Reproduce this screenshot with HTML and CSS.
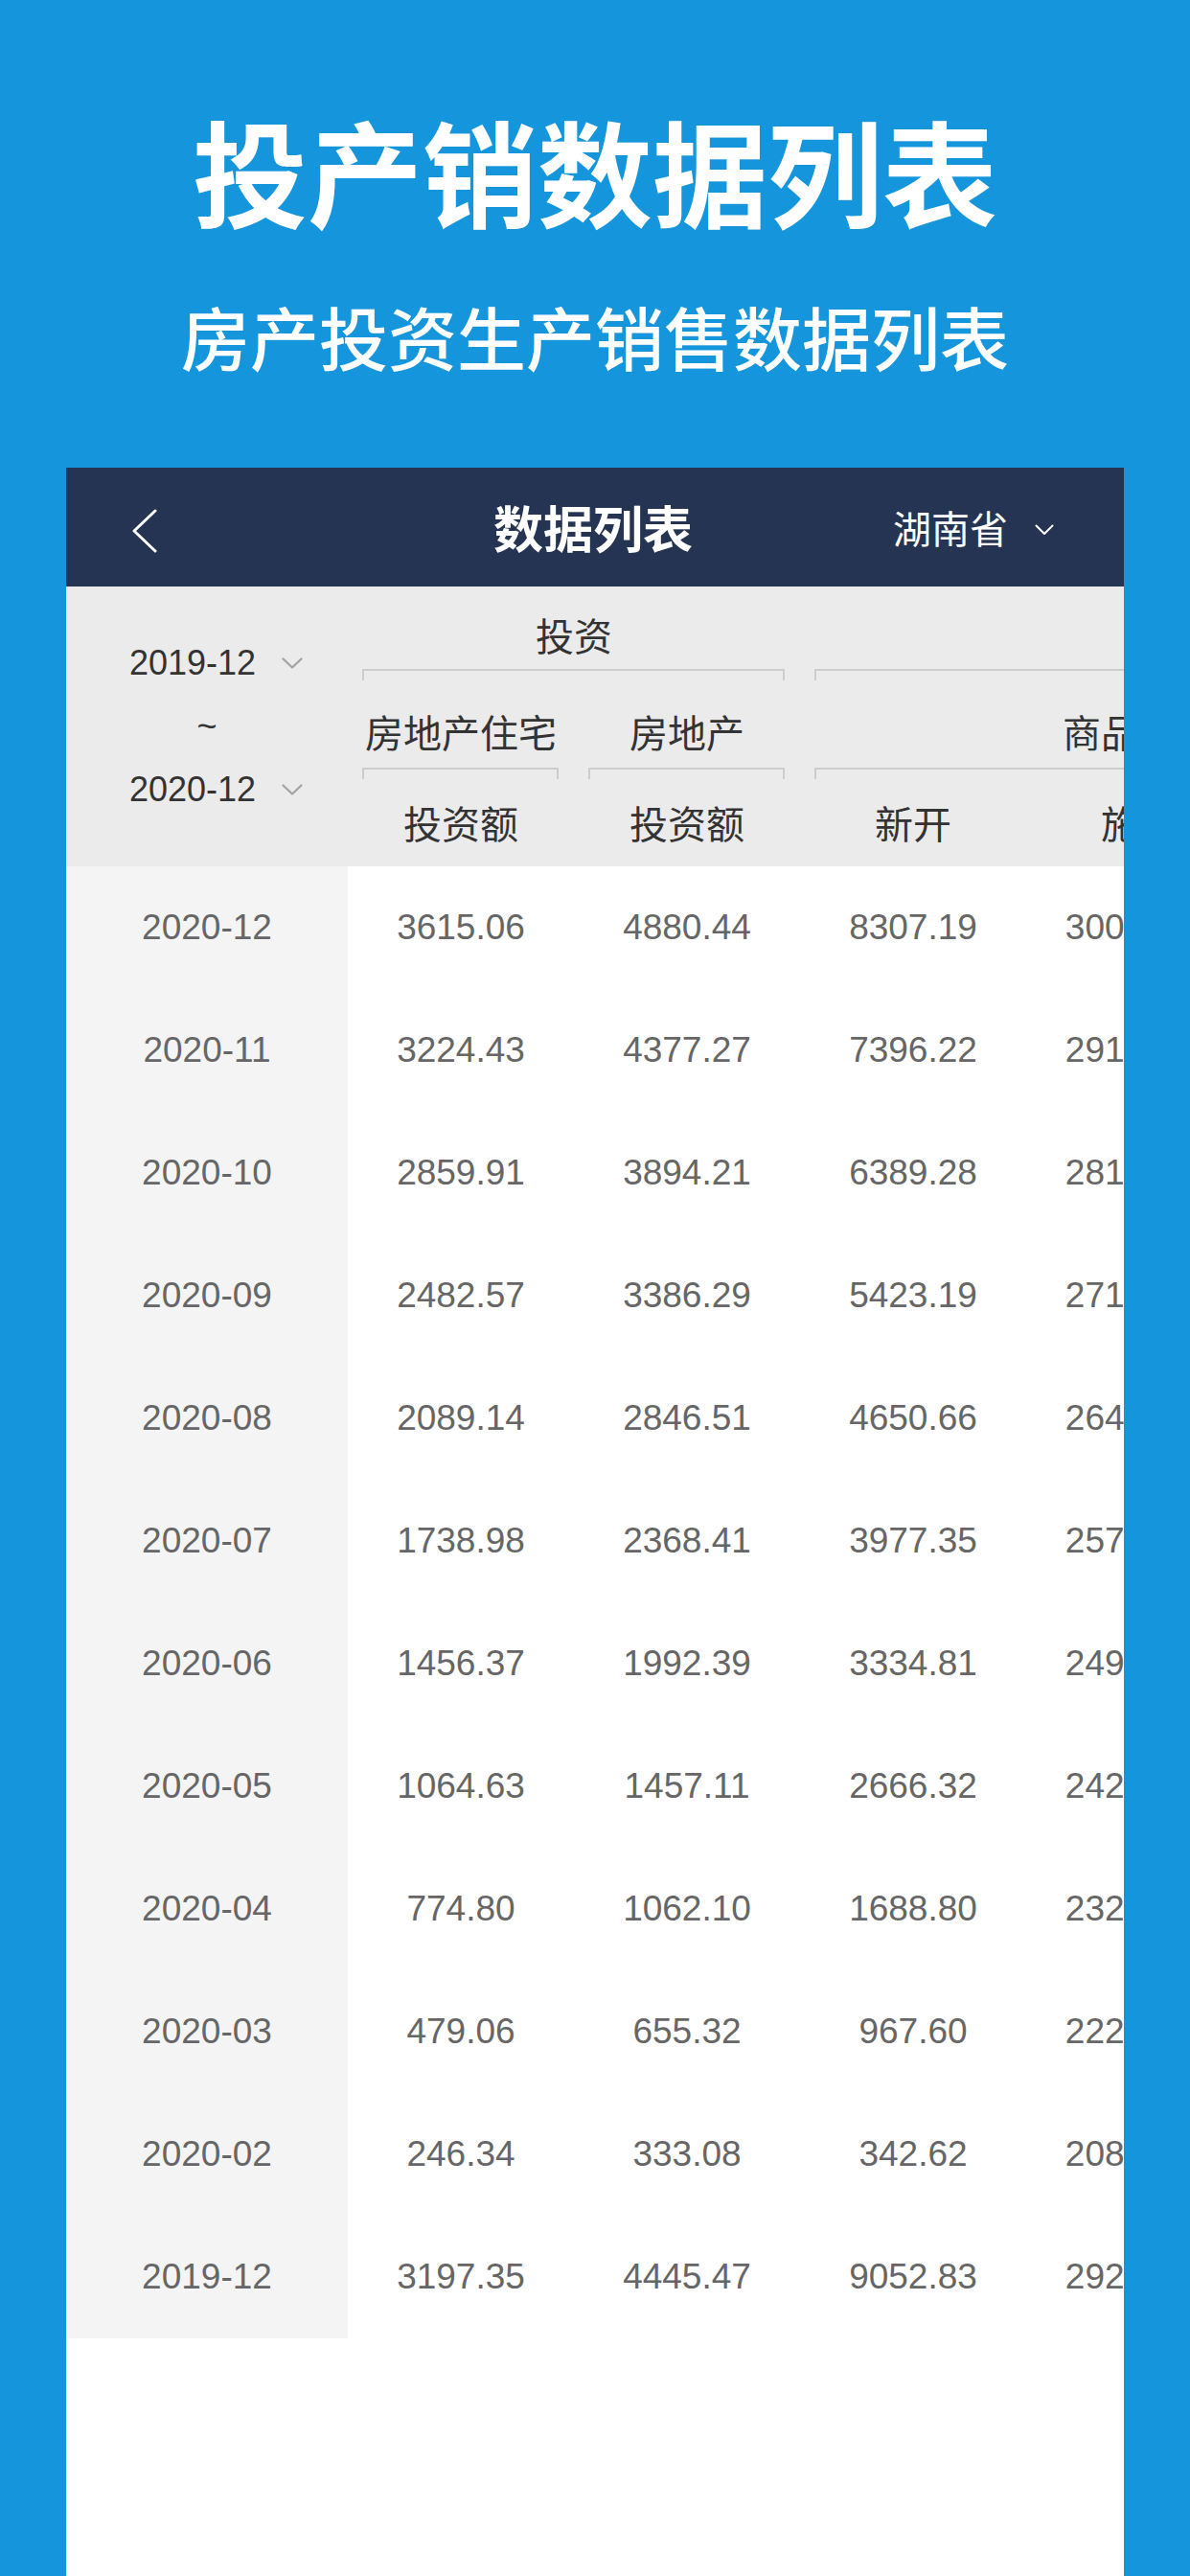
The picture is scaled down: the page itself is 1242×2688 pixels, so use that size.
FILE: index.html
```html
<!DOCTYPE html>
<html lang="zh-CN">
<head>
<meta charset="utf-8">
<title>投产销数据列表</title>
<link rel="stylesheet" href="styles.css">
</head>
<body>
<header class="hero">
  <h1 class="title">投产销数据列表</h1>
  <p class="subtitle">房产投资生产销售数据列表</p>
</header>
<main class="card">
  <div class="nav">
    <svg class="back" viewBox="0 0 26 46"><polyline points="24,2 2,23 24,44" fill="none" stroke="#fff" stroke-width="3" stroke-linecap="round" stroke-linejoin="round"/></svg>
    <div class="nav-title">数据列表</div>
    <div class="region"><span>湖南省</span><svg class="region-arrow" viewBox="0 0 20 12"><polyline points="1.5,1.5 10,10 18.5,1.5" fill="none" stroke="#fff" stroke-width="2" stroke-linecap="round" stroke-linejoin="round"/></svg></div>
  </div>
  <div class="thead">
    <div class="dates">
      <div class="date"><span>2019-12</span><svg class="date-arrow" viewBox="0 0 22 12"><polyline points="1.5,1.5 11,10.5 20.5,1.5" fill="none" stroke="#a3a3a3" stroke-width="2.2" stroke-linecap="round" stroke-linejoin="round"/></svg></div>
      <div class="tilde">~</div>
      <div class="date"><span>2020-12</span><svg class="date-arrow" viewBox="0 0 22 12"><polyline points="1.5,1.5 11,10.5 20.5,1.5" fill="none" stroke="#a3a3a3" stroke-width="2.2" stroke-linecap="round" stroke-linejoin="round"/></svg></div>
    </div>
    <div class="lab r1 c2-4">投资</div>
    <div class="lab r1 c4-8">生产销售</div>
    <div class="br r2 c2-4"></div>
    <div class="br r2 c4-8"></div>
    <div class="lab r3 c2">房地产住宅</div>
    <div class="lab r3 c3">房地产</div>
    <div class="lab r3 c4-7">商品房屋</div>
    <div class="lab r3 c7">商品房</div>
    <div class="br r4 c2"></div>
    <div class="br r4 c3"></div>
    <div class="br r4 c4-7"></div>
    <div class="br r4 c7"></div>
    <div class="lab r5 c2">投资额</div>
    <div class="lab r5 c3">投资额</div>
    <div class="lab r5 c4">新开</div>
    <div class="lab r5 c5">施工</div>
    <div class="lab r5 c6">竣工</div>
    <div class="lab r5 c7">销售</div>
  </div>
  <div class="tbody">
    <div class="row"><div class="cell month">2020-12</div><div class="cell">3615.06</div><div class="cell">4880.44</div><div class="cell">8307.19</div><div class="cell">30046.52</div></div>
    <div class="row"><div class="cell month">2020-11</div><div class="cell">3224.43</div><div class="cell">4377.27</div><div class="cell">7396.22</div><div class="cell">29193.18</div></div>
    <div class="row"><div class="cell month">2020-10</div><div class="cell">2859.91</div><div class="cell">3894.21</div><div class="cell">6389.28</div><div class="cell">28196.07</div></div>
    <div class="row"><div class="cell month">2020-09</div><div class="cell">2482.57</div><div class="cell">3386.29</div><div class="cell">5423.19</div><div class="cell">27185.63</div></div>
    <div class="row"><div class="cell month">2020-08</div><div class="cell">2089.14</div><div class="cell">2846.51</div><div class="cell">4650.66</div><div class="cell">26472.91</div></div>
    <div class="row"><div class="cell month">2020-07</div><div class="cell">1738.98</div><div class="cell">2368.41</div><div class="cell">3977.35</div><div class="cell">25718.34</div></div>
    <div class="row"><div class="cell month">2020-06</div><div class="cell">1456.37</div><div class="cell">1992.39</div><div class="cell">3334.81</div><div class="cell">24953.26</div></div>
    <div class="row"><div class="cell month">2020-05</div><div class="cell">1064.63</div><div class="cell">1457.11</div><div class="cell">2666.32</div><div class="cell">24209.87</div></div>
    <div class="row"><div class="cell month">2020-04</div><div class="cell">774.80</div><div class="cell">1062.10</div><div class="cell">1688.80</div><div class="cell">23261.45</div></div>
    <div class="row"><div class="cell month">2020-03</div><div class="cell">479.06</div><div class="cell">655.32</div><div class="cell">967.60</div><div class="cell">22279.13</div></div>
    <div class="row"><div class="cell month">2020-02</div><div class="cell">246.34</div><div class="cell">333.08</div><div class="cell">342.62</div><div class="cell">20854.62</div></div>
    <div class="row"><div class="cell month">2019-12</div><div class="cell">3197.35</div><div class="cell">4445.47</div><div class="cell">9052.83</div><div class="cell">29236.71</div></div>
  </div>
</main>
</body>
</html>
```

FILE: styles.css
```css
html, body {
  margin: 0;
  padding: 0;
}
body {
  background: #1595db;
  font-family: "Liberation Sans", "Noto Sans CJK SC", sans-serif;
  height: 2688px;
  overflow: hidden;
}
.hero {
  height: 488px;
  box-sizing: border-box;
  padding-top: 117px;
  text-align: center;
  color: #fff;
}
.title {
  margin: 0;
  font-family: "Noto Sans CJK SC", sans-serif;
  font-size: 120px;
  line-height: 120px;
  font-weight: 700;
}
.subtitle {
  margin: 77px 0 0;
  font-family: "Noto Sans CJK SC", sans-serif;
  font-size: 72px;
  line-height: 72px;
  font-weight: 500;
}
.card {
  margin: 0 69px;
  background: #fff;
  height: 2200px;
  overflow: hidden;
}
.nav {
  height: 124px;
  box-sizing: border-box;
  background: #253452;
  display: grid;
  grid-template-columns: 1fr auto 1fr;
  align-items: center;
  padding: 0 73px 0 69px;
  color: #fff;
}
.back {
  width: 26px;
  height: 46px;
  margin-top: 8px;
}
.nav-title {
  font-family: "Noto Sans CJK SC", sans-serif;
  font-size: 52px;
  font-weight: 700;
  line-height: 60px;
}
.region {
  justify-self: end;
  display: flex;
  align-items: center;
  gap: 28px;
  font-family: "Noto Sans CJK SC", sans-serif;
  font-size: 40px;
  line-height: 50px;
}
.region-arrow {
  width: 20px;
  height: 12px;
  margin-top: 6px;
}
.thead {
  background: #ebebeb;
  display: grid;
  grid-template-columns: 294px repeat(6, 236px);
  grid-template-rows: 86px 12px 91px 12px 91px;
  color: #333;
  font-size: 40px;
}
.dates {
  grid-column: 1;
  grid-row: 1 / 6;
  display: flex;
  flex-direction: column;
  justify-content: center;
  align-items: center;
  gap: 26px;
  font-size: 36px;
  color: #333;
}
.date {
  display: flex;
  align-items: center;
  gap: 27px;
  line-height: 40px;
  padding-left: 19px;
}
.date-arrow {
  width: 22px;
  height: 12px;
}
.tilde {
  line-height: 40px;
  font-size: 36px;
}
.lab {
  display: flex;
  justify-content: center;
  align-items: flex-end;
  line-height: 40px;
  white-space: nowrap;
  box-sizing: border-box;
}
.br {
  border: 2px solid #cdcdcd;
  border-bottom: 0;
  margin: 0 16px 0 15px;
  box-sizing: border-box;
}
.r1 { grid-row: 1; padding-bottom: 13px; }
.r2 { grid-row: 2; }
.r3 { grid-row: 3; padding-bottom: 15px; }
.r4 { grid-row: 4; }
.r5 { grid-row: 5; padding-bottom: 23px; }
.br.r2, .br.r4 { padding-bottom: 0; }
.c2 { grid-column: 2; }
.c3 { grid-column: 3; }
.c4 { grid-column: 4; }
.c5 { grid-column: 5; }
.c6 { grid-column: 6; }
.c7 { grid-column: 7; }
.c2-4 { grid-column: 2 / 4; }
.c4-7 { grid-column: 4 / 7; }
.c4-8 { grid-column: 4 / 8; }
.row {
  display: grid;
  grid-template-columns: 294px repeat(6, 236px);
  height: 128px;
}
.cell {
  display: flex;
  align-items: center;
  justify-content: center;
  font-size: 37px;
  color: #666;
  white-space: nowrap;
}
.cell.month {
  background: #f4f4f4;
}
```
